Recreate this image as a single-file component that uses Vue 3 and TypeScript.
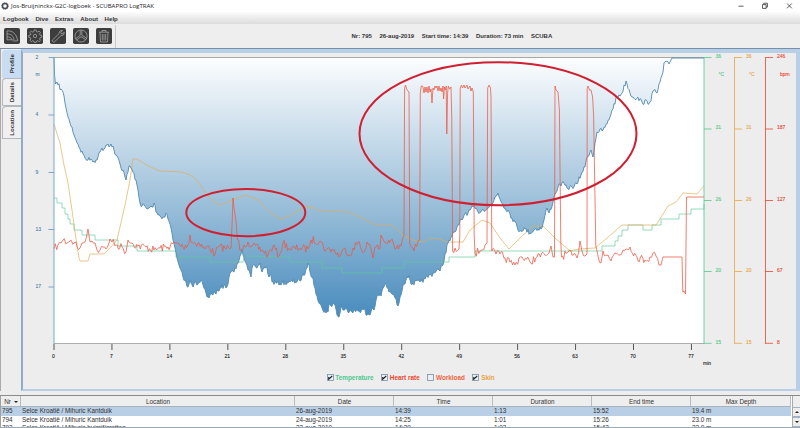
<script setup lang="ts">
type Point = [number, number]

const menus: string[] = ['Logbook', 'Dive', 'Extras', 'About', 'Help']
const tabs: string[] = ['Profile', 'Details', 'Location']
const summary: string[] = ['Nr: 795', '26-aug-2019', 'Start time: 14:39', 'Duration: 73 min', 'SCUBA']
const series = [
  { name: 'Temperature', on: true, tone: 'green' },
  { name: 'Heart rate', on: true, tone: 'red' },
  { name: 'Workload', on: false, tone: 'coral' },
  { name: 'Skin', on: true, tone: 'orange' },
]
const columns: string[] = ['Location', 'Date', 'Time', 'Duration', 'End time', 'Max Depth']
const dives: string[][] = [
  ['795', 'Selce Kroatië / Mihuric Kantduik', '26-aug-2019', '14:39', '1:13', '15:52', '19.4 m'],
  ['794', 'Selce Kroatië / Mihuric Kantduik', '24-aug-2019', '14:25', '1:01', '15:26', '23.0 m'],
  ['793', 'Selce Kroatië / Mihuric huisrif/grotten', '23-aug-2019', '14:39', '1:03', '15:42', '23.0 m'],
]

const depthTicks = [
  { y: 57.5, t: '2' }, { y: 115, t: '4' }, { y: 172.5, t: '9' }, { y: 229.5, t: '13' }, { y: 287, t: '17' },
]
const timeTicks = Array.from({ length: 12 }, (_, i) => ({ x: 54 + i * 57.95, t: String(i * 7) }))
const tickRows: number[] = [57.5, 129, 200.5, 271.5, 343.3]
const scales = [
  { x: 704, tone: 'green', unit: '°C', labels: ['36', '31', '26', '20', '15'] },
  { x: 734.5, tone: 'orange', unit: '°C', labels: ['36', '31', '26', '20', '15'] },
  { x: 765.5, tone: 'red', unit: 'bpm', labels: ['246', '187', '127', '67', '8'] },
]

function parse(s: string): Point[] {
  return s.trim().split(/\s+/).map((p) => p.split(',').map(Number) as Point)
}

// Adds sample-to-sample sensor jitter between the key points of a trace.
function roughen(points: Point[], amp: number, step: number, until: number): Point[] {
  let seed = 7
  const rnd = () => {
    seed = (seed * 16807) % 2147483647
    return seed / 2147483647 - 0.5
  }
  const out: Point[] = [points[0]]
  for (let i = 1; i < points.length; i++) {
    const [x0, y0] = points[i - 1]
    const [x1, y1] = points[i]
    const n = Math.floor((x1 - x0) / step)
    if (Math.abs(y1 - y0) < 22 && x1 <= until) {
      for (let k = 1; k < n; k++) {
        const f = k / n
        out.push([x0 + (x1 - x0) * f, y0 + (y1 - y0) * f + rnd() * amp])
      }
    }
    out.push([x1, y1])
  }
  return out
}

function path(points: Point[]): string {
  return 'M' + points.map(([x, y]) => `${x.toFixed(1)} ${y.toFixed(1)}`).join('L')
}

const depth = roughen(parse(`
54,57.5 54.6,76 55.5,84 57,82 58,85 61,89 64,96 66,108 68,117 70,123 72,127 74,135 76,140 78,144 80,149 83,154 85,158
88,160 91,159 93,162 94,161 96,160 98,157 100,152 102,148 104,149 106,145 108,144 109,147 111,144 113,146 114,150
116,155 118,158 120,164 121,168 123,170 125,177 126,180 128,172 129,166 131,168 133,172 136,180 138,190 140,203
142,206 145,206 147,209 149,208 152,207 154,203 156,212 158,215 160,216 163,217 165,217 166,213 168,219 171,228
173,240 175,248 177,258 179,265 181,270 183,277 185,280 188,287 190,280 193,287 195,281 198,284 201,280 203,285
206,293 207,297 209,298 211,293 215,293 219,291 221,288 224,285 226,288 228,284 229,277 232,270 234,272 237,264
240,256 242,249 244,257 246,263 248,270 251,277 252,268 255,266 257,268 259,265 260,263 262,272 264,267 267,268
269,277 271,275 272,282 276,283 282,283 290,282 300,281 302,276 305,274 306,269 308,263 310,272 313,278 315,288
317,296 319,303 322,308 326,313 328,312 329,304 331,306 333,303 335,305 337,315 339,317 341,307 344,310 350,310
355,311 365,310 366,315 368,314 370,315 372,308 374,310 376,300 378,294 381,296 383,288 386,284 389,292 391,293
393,294 395,298 398,306 400,297 403,285 406,280 409,275 411,284 413,283 420,282 425,279 430,275 434,273 437,269
440,271 443,265 445,254 448,243 449,240 452,236 455,232 459,225 460,220 462,220 465,213 468,213 473,207 478,212
482,210 488,208 493,203 495,197 498,193 500,199 502,203 505,208 508,210 512,218 515,222 518,230 525,229 530,233
535,229 542,228 544,220 547,208 549,213 553,202 555,194 558,187 562,183 567,188 572,187 577,184 582,172 585,167
587,157 591,150 593,157 595,143 597,132 603,130 607,124 610,117 612,110 617,97 622,93 626,81 630,93 633,97
637,98 642,102 650,102 653,91 657,93 660,82 663,72 664,63 669,64 672,58 704,58`), 5, 0.9, 670)

const heart = roughen(parse(`
54,249 58,245 61,243 63,240 67,243 70,241 74,243 76,242 77,247 80,248 82,243 85,242 88,229 90,242 92,241 95,243 97,250
100,250 103,247 106,249 110,239 112,242 116,245 122,247 126,252 128,240 132,243 138,246 146,247 154,250 160,248
168,247 176,243 183,247 189,243 190,235 191,242 198,243 205,249 209,246 215,255 218,247 225,248 231,248 232,226
233,198 234,208 236,221 237.5,240 241,250 244,245 248,242 252,246 262,250 268,255 273,246 279,256 283,243 290,249
300,248 308,249 311,240 320,241 326,250 332,249 340,256 345,248 350,256 353,248 358,242 363,253 367,242 371,249
373,258 375,247 380,248 381,235 385,243 391,240 395,249 401,246 404,236 404.6,88 405.5,85 407,90 409,92 409.7,243
414,251 418,241 419.7,240 420.3,93 421.2,86 422.5,86 423.2,88 424,93 425,87 426,92 427,87 428,93 429,86 430,92 431,89
432,103 433,88 434,90 435,86 436,88 437,86 438,91 439,86 440,91 441,88 442,92 443,86 443.6,99 444.5,87 445.5,90
446.2,86 446.800,134 447.6,93 448.3,86 451,87 451.8,120 452.6,251 455,248 459,249 459.8,235 460.2,88 461.5,85 462.5,88
464,85 465,88 467,85 468,89 470,86 471,91 472,88 473.3,92 474.2,236 475,253 480,251 485,245 487,243 487.7,88 489,85
490.5,88 491,98 491.8,251 496,254 500,254 505,258 510,262 515,265 519,258 522,257 530,262 537,257 545,255 549,253
551,246 553,257 554.5,257 555,86 556,90 558,92 559.4,110 560.8,242 561.5,257 567,253 572,255 577,258 580,241 582,251
585,256 587,254 587.2,88 588,86 591,90 592.6,97 593.6,115 595.8,246 598,256 601,263 603,251 608,255 611,261
615,253 620,255 623,250 626,249 630,247 637,257 645,260 650,257 653,253 656,256 659,265 661,265 663,257 682,257 682.8,292
684,291 685.5,294 686.5,197 704,197`), 8, 1.1, 662)

const depthLine = path(depth)
const depthArea = depthLine + 'L704 57.5Z'
const heartLine = path(heart)
const skinLine = path(parse(`
54,124 60,143 64,165 68,183 72,210 75,232 79,258 80,261 88,261 90,254 104,254 110,248 117,240 125,205 130,180 133,159
137,159 148,166 160,171 182,172 190,175 196,179 205,192 215,203 221,205 232,200 240,197 246,195 258,200 270,212 280,219
290,216 305,206 312,207 320,211 350,212 362,218 376,225 392,225 404,236 415,241 425,242 430,238 440,239 446,242
463,242 470,230 482,220 490,223 500,238 509,249 520,238 533,226 543,226 555,238 570,251 579,249 595,248 607,238
622,225 656,225 668,206 676,202 683,193 697,194 704,186`))
const tempLine = path(parse(`
54,198 57,198 57,203 62,203 62,208 65,208 65,214 68,214 68,219 70,219 70,224 74,224 74,230 82,230 82,235 95,235 95,240
118,240 118,246 137,246 137,251 176,251 176,257 210,257 210,262 243,262 244,256 290,257 290,262 322,262 322,268 342,268
342,273 382,273 382,268 404,268 404,262 449,262 449,257 475,257 475,251 602,251 602,246 615,246 615,241 618,241
618,236 622,236 622,230 628,230 628,225 643,225 643,230 652,230 652,225 661,225 661,219 679,219 679,214 691,214
691,209 704,209 704,204`))
</script>

<template>
  <div class="window">
    <header class="titlebar">
      <svg class="app-icon" viewBox="0 0 8 8">
        <circle cx="4" cy="4" r="2.5" fill="none" stroke="#4a4f55" stroke-width="1.5" />
        <circle cx="4" cy="4" r="3.4" fill="none" stroke="#4a4f55" stroke-width=".7" stroke-dasharray="1.2 .9" />
      </svg>
      <span class="title">Jos-Bruijninckx-G2C-logboek - SCUBAPRO LogTRAK</span>
      <svg class="controls" viewBox="0 0 56 8" fill="none" stroke="#333" stroke-width=".8">
        <path d="M.5 4.2h5" />
        <path d="M24.5 2.6h3.6v3.8h-3.6zM25.8 2.4V1.2h3.6v3.9h-1.1" />
        <path d="M49 1.5l4.8 4.8M53.8 1.5L49 6.3" />
      </svg>
    </header>
    <nav class="menubar"><span v-for="m in menus" :key="m">{{ m }}</span></nav>
    <div class="toolbar">
      <div class="tools">
        <svg viewBox="0 0 16 16"><rect width="16" height="16" rx="1.8" />
          <path d="M3 3c5-.8 10 3 10.600 9.800l-4 .2-1.600-1.300-5 .2zM3 6c4-.5 6.500 2 7 6M3 9c2.600-.3 4 .6 5 2.700" /></svg>
        <svg viewBox="0 0 16 16"><rect width="16" height="16" rx="1.8" />
          <path d="M7 2.500h2l.3 1.700 1.200.5 1.400-1 1.400 1.400-1 1.400.5 1.200 1.700.3v2l-1.700.3-.5 1.200 1 1.400-1.400 1.400-1.400-1-1.200.5-.3 1.200H7l-.3-1.200-1.200-.5-1.400 1-1.400-1.400 1-1.400-.5-1.200-1.700-.3V8l1.700-.3.5-1.200-1-1.400 1.400-1.400 1.400 1 1.200-.5z" transform="translate(.2 -.6)" /><circle cx="8" cy="8" r="1.700" /></svg>
        <svg viewBox="0 0 16 16"><rect width="16" height="16" rx="1.8" />
          <path d="M2.500 12l6.700-6.500c-.3-2 1.200-3.400 3.300-3l-1.700 1.800.3 1.300 1.400.3 1.600-1.700c.4 2-1 3.600-3 3.300L4.300 14c-1.300.4-2.400-.8-1.800-2z" /></svg>
        <svg viewBox="0 0 16 16"><rect width="16" height="16" rx="1.8" />
          <path d="M8 2a6 6 0 1 0 .1 0M7.200 2.200v5.100L2.700 10.700M8.800 2.200v5.100l4.800 2.900M3.600 12l4.400-3.300 4.700 3" /></svg>
        <svg viewBox="0 0 16 16"><rect width="16" height="16" rx="1.8" />
          <path d="M3 4.200h10M6 4V2.500h4V4M4 4.500l.5 9.500h7l.5-9.500M6.300 6v6.500M8 6v6.500M9.700 6v6.500" /></svg>
      </div>
      <div class="summary"><span v-for="s in summary" :key="s">{{ s }}</span></div>
    </div>

    <main class="content">
      <aside class="tabs">
        <div v-for="(t, i) in tabs" :key="t" class="tab" :class="{ active: i === 0 }"><span>{{ t }}</span></div>
      </aside>
      <section class="panel">
        <svg class="chart" viewBox="23 53 773 316">
          <defs>
            <linearGradient id="water" gradientUnits="userSpaceOnUse" x1="0" y1="57" x2="0" y2="318">
              <stop offset="0" stop-color="#fdfeff" />
              <stop offset=".36" stop-color="#bfd6e7" />
              <stop offset=".7" stop-color="#83b0d1" />
              <stop offset="1" stop-color="#478bbd" />
            </linearGradient>
          </defs>
          <rect x="54" y="57.500" width="650" height="286" fill="#fff" />
          <path :d="depthArea" fill="url(#water)" />
          <path d="M54 57.500H704" stroke="#a9a9a4" />
          <path d="M54 343.500H704" stroke="#adadad" />
          <path :d="tempLine" class="trace temp" />
          <path :d="skinLine" class="trace skin" />
          <path :d="depthLine" class="trace depth" />
          <path :d="heartLine" class="trace heart" />

          <path d="M54 57V344" stroke="#7ba9c8" />
          <g v-for="d in depthTicks" :key="d.t">
            <path :d="`M48.500 ${d.y}H54`" stroke="#7ba9c8" />
            <text x="35.500" :y="d.y + 1" class="blue">{{ d.t }}</text>
          </g>
          <text x="35.500" y="75.800" class="blue">m</text>

          <g v-for="t in timeTicks" :key="t.t">
            <path :d="`M${t.x} 344V350`" stroke="#555" />
            <text :x="t.x - .5" y="357.500" text-anchor="middle" class="dark">{{ t.t }}</text>
          </g>
          <text x="703" y="365" class="dark">min</text>

          <g v-for="s in scales" :key="s.x" :class="s.tone">
            <path :d="`M${s.x} 57V343.800`" class="axis" />
            <g v-for="(y, i) in tickRows" :key="y">
              <path :d="`M${s.x} ${y}h7.500`" class="axis" />
              <text :x="s.x + 11.500" :y="y + .2">{{ s.labels[i] }}</text>
            </g>
            <text :x="s.x + 14.500" y="75.800">{{ s.unit }}</text>
          </g>

          <ellipse cx="498" cy="133.700" rx="138.500" ry="71.500" class="mark" />
          <ellipse cx="245.800" cy="212.600" rx="59.500" ry="23.600" class="mark" />
        </svg>
        <div class="legend">
          <label v-for="s in series" :key="s.name" :class="s.tone">
            <svg viewBox="0 0 7 7"><rect x=".5" y=".5" width="6" height="6" fill="#e6eff8" stroke="#7a8fa5" stroke-width=".8" />
              <path v-if="s.on" d="M1.700 2.900v2.300l3.500-3.200" fill="none" stroke="#222" stroke-width="1.100" /></svg>{{ s.name }}
          </label>
        </div>
      </section>
    </main>

    <section class="table">
      <div class="rows">
        <div class="row head">
          <span>Nr <i class="sort"></i></span><span v-for="c in columns" :key="c">{{ c }}</span>
        </div>
        <div v-for="(d, i) in dives" :key="d[0]" class="row" :class="{ selected: i === 0 }">
          <span v-for="(c, k) in d" :key="k">{{ c }}</span>
        </div>
      </div>
      <div class="scroll">
        <div class="corner"></div>
        <div class="btn"><i class="up"></i></div>
        <div class="btn"><i class="down"></i></div>
      </div>
    </section>
  </div>
</template>

<style>
body { overflow: hidden; }
</style>

<style scoped>
.window { width: 800px; height: 428px; display: flex; flex-direction: column; overflow: hidden; background: #ededed; font-family: "Liberation Sans", Arial, sans-serif; font-size: 6px; color: #333; }
.window * { box-sizing: border-box; }
.titlebar { height: 12px; flex: none; display: flex; align-items: center; background: #fff; padding: 0 10px 0 1px; }
.app-icon { width: 8px; height: 8px; margin-right: 2px; }
.title { font: 6.1px/12px "Open Sans", "Noto Sans", sans-serif; color: #222; white-space: nowrap; }
.controls { width: 56px; height: 8px; margin-left: auto; margin-right: -4px; }
.menubar { height: 12px; flex: none; display: flex; gap: 6.700px; padding-left: 3px; align-items: center; font-weight: bold; font-size: 6.100px; background: linear-gradient(#fcfcfc, #dcdcdc); }
.toolbar { height: 24px; flex: none; display: flex; align-items: center; background: #eee; }
.tools { display: flex; gap: 7px; padding: 0 3px 0 4px; width: 116px; height: 23px; align-items: center; border-right: 1px solid #c9c9c9; }
.tools svg { width: 16px; height: 16px; flex: none; }
.tools rect { fill: #3d3d3d; }
.tools path, .tools circle { fill: none; stroke: #b5b5b5; stroke-width: .7; }
.summary { display: flex; gap: 7.600px; margin-left: 235.500px; font-weight: bold; font-size: 6px; white-space: nowrap; }
.content { height: 343px; flex: none; display: flex; border-top: 1px solid #7590ae; }
.tabs { width: 21px; flex: none; border-left: 1px solid #aaa; padding-top: 1px; }
.tab { height: 28px; border: 1px solid #b4b8bd; border-right: 0; border-radius: 4px 0 0 0; margin-left: 1px; display: flex; align-items: center; justify-content: center; background: #f0f0f0; }
.tab:nth-child(3) { height: 33px; }
.tab.active { background: #c8ddf2; border-color: #c8ddf2; }
.tab span { writing-mode: vertical-rl; transform: rotate(180deg); font-weight: bold; font-size: 6.200px; line-height: 8px; }
.panel { flex: 1; display: flex; flex-direction: column; border-style: solid; border-color: #b8cfe5; border-width: 4px 4px 2px 2px; border-left-color: #8fadc9; }
.chart { width: 773px; height: 316px; flex: none; display: block; }
.chart text { font-size: 5px; fill: currentColor; stroke: currentColor; stroke-width: .1; }
.trace { fill: none; stroke-width: .9; stroke-linejoin: round; }
.temp { stroke: #5fca9a; opacity: .75; }
.skin { stroke: #e2ac50; opacity: .75; }
.depth { stroke: #5089b0; }
.heart { stroke: #ec5742; opacity: .85; }
.axis { stroke: currentColor; fill: none; opacity: .8; }
.mark { fill: none; stroke: #d01f30; stroke-width: 2; }
.blue { color: #4f83a5; }
.dark { color: #222; }
.green { color: #4fc78d; }
.orange { color: #e9a33f; }
.red { color: #ec4430; }
.coral { color: #f26342; }
.legend { flex: 1; display: flex; justify-content: flex-start; padding: 5px 0 0 303.500px; gap: 7.500px; font-weight: bold; font-size: 6.400px; line-height: 7px; }
.legend label { display: flex; height: 7px; gap: 1.800px; white-space: nowrap; }
.legend svg { width: 7px; height: 7px; }
.table { flex: 1; display: flex; margin-top: 4px; border-top: 1px solid #8b8b8b; border-bottom: 1px solid #9aa9b8; border-left: 1px solid #a0a0a0; background: #fff; overflow: hidden; }
.rows { width: 790px; }
.row { display: grid; grid-template-columns: 20px 274px 99px 99px 99px 99px 100px; height: 8.500px; line-height: 8.500px; font-size: 6.350px; white-space: nowrap; }
.row span { padding-left: 1px; overflow: hidden; }
.row.head { height: 11px; line-height: 11px; background: #eee; border-bottom: 1px solid #a8b3be; }
.row.head span { text-align: center; border-right: 1px solid #b5bcc4; }
.row.selected { background: #b8cfe5; }
.sort { display: inline-block; border: 2px solid transparent; border-top: 2.500px solid #222; border-bottom: 0; margin: 0 0 1px 1px; }
.scroll { width: 8px; margin-left: auto; background: #eee; border-left: 1px solid #aaa; }
.corner { height: 11px; }
.btn { height: 10px; border: 1px solid #9eb3c8; border-width: 1px 0; display: flex; align-items: center; justify-content: center; }
.btn i { border: 2px solid transparent; }
.btn .up { border-bottom: 2.500px solid #222; border-top: 0; }
.btn .down { border-top: 2.500px solid #222; border-bottom: 0; }
</style>
